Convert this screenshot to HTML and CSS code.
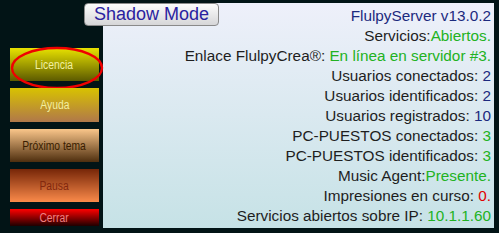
FILE: index.html
```html
<!DOCTYPE html>
<html lang="es">
<head>
<meta charset="utf-8">
<title>FlulpyServer</title>
<link rel="stylesheet" href="styles.css">
</head>
<body>
<div class="app">
  <div class="menu">
    <div class="btn b-lic"><span>Licencia</span>
      <svg class="mark" width="94" height="44" viewBox="0 0 94 44"><ellipse cx="47" cy="22" rx="45" ry="20" fill="none" stroke="#f00000" stroke-width="2.4"/></svg>
    </div>
    <div class="btn b-ayu"><span>Ayuda</span></div>
    <div class="btn b-pro"><span>Próximo tema</span></div>
    <div class="btn b-pau"><span>Pausa</span></div>
    <div class="btn b-cer"><span>Cerrar</span></div>
  </div>
  <div class="panel">
    <div class="line blue">FlulpyServer v13.0.2</div>
    <div class="line">Servicios:<span class="green">Abiertos.</span></div>
    <div class="line">Enlace FlulpyCrea®: <span class="green">En línea en servidor #3.</span></div>
    <div class="line">Usuarios conectados: <span class="blue">2</span></div>
    <div class="line">Usuarios identificados: <span class="blue">2</span></div>
    <div class="line">Usuarios registrados: <span class="blue">10</span></div>
    <div class="line">PC-PUESTOS conectados: <span class="green">3</span></div>
    <div class="line">PC-PUESTOS identificados: <span class="green">3</span></div>
    <div class="line">Music Agent:<span class="green">Presente.</span></div>
    <div class="line">Impresiones en curso: <span class="red">0.</span></div>
    <div class="line">Servicios abiertos sobre IP: <span class="green">10.1.1.60</span></div>
  </div>
  <div class="shadow-btn">Shadow Mode</div>
</div>
</body>
</html>
```

FILE: styles.css
```css
html, body {
  margin: 0;
  padding: 0;
  background: #021416;
}
body {
  width: 499px;
  height: 233px;
  overflow: hidden;
  font-family: "Liberation Sans", Arial, sans-serif;
}
.app {
  position: relative;
  display: flex;
  width: 499px;
  height: 233px;
}
.menu {
  width: 89px;
  padding: 48px 4px 0 10px;
  display: flex;
  flex-direction: column;
  gap: 7px;
}
.btn {
  position: relative;
  display: flex;
  align-items: center;
  justify-content: center;
  font-size: 12px;
  height: 34px;
}
.btn span {
  display: inline-block;
  transform: scaleX(0.86);
  white-space: nowrap;
}
.b-lic {
  height: 33px;
  background: linear-gradient(#e8e200, #5c5a00);
  color: #f2f0a0;
}
.b-ayu {
  background: linear-gradient(#d8c200, #b0784a);
  color: #f2eea0;
}
.b-pro {
  height: 33px;
  background: linear-gradient(#fac68a, #4e2e0e);
  color: #3a1e00;
}
.b-pau {
  height: 33px;
  background: linear-gradient(#762608, #fa8a4a);
  color: #82280e;
}
.b-cer {
  height: 17px;
  background: linear-gradient(#ff0000, #1e0000);
  color: #f08080;
}
.mark {
  position: absolute;
  left: 0;
  top: -2px;
}
.panel {
  margin-top: 3px;
  width: 388px;
  height: 222px;
  padding: 3px 3px 0 0;
  background: linear-gradient(#eef0fa, #c6e2e6);
  display: flex;
  flex-direction: column;
  align-items: flex-end;
  color: #1e1e1e;
  font-size: 15.3px;
}
.line {
  height: 20px;
  line-height: 20px;
  white-space: nowrap;
}
.blue { color: #1c2a7e; }
.green { color: #22b222; }
.red { color: #e00000; }
.shadow-btn {
  position: absolute;
  left: 84px;
  top: 3px;
  width: 133px;
  height: 21px;
  border: 1px solid #8a8a8a;
  border-radius: 4px;
  background: linear-gradient(#fcfcfc, #d6d6d8);
  color: #2a22a0;
  font-size: 18px;
  line-height: 21px;
  text-align: center;
}
```
